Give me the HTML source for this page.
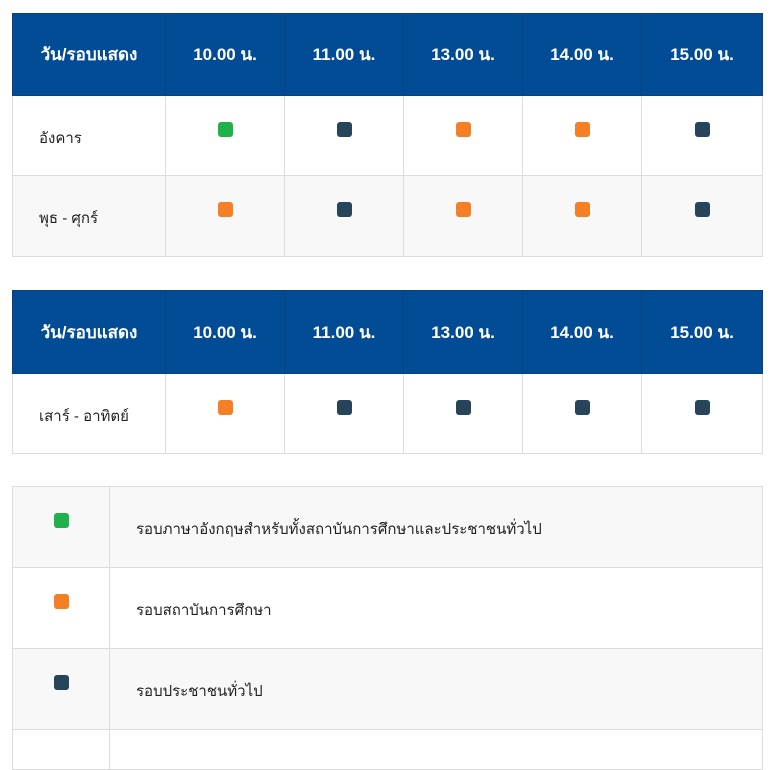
<!DOCTYPE html>
<html><head><meta charset="utf-8"><style>
body{margin:0;background:#fff;font-family:"Liberation Sans","Noto Sans CJK SC","WenQuanYi Zen Hei",sans-serif;}
.t{position:absolute;left:12px;width:750px;border-collapse:collapse;table-layout:fixed;}
.t td,.t th{border:1px solid #dcdcdc;padding:0;}
.t th{background:#024c96;color:#fff;font-weight:bold;font-size:17px;text-align:center;border-color:#0a427f;}
.t td{font-size:15px;color:#222;vertical-align:top;}
.t td.n{padding:30px 0 0 26px;}
.t td.c{text-align:center;padding-top:26px;}
.d{display:inline-block;width:15px;height:15px;border-radius:3px;}
.g{background:#20b14b}.o{background:#f47f25}.k{background:#27455a}
tr.alt td{background:#f8f8f8}
</style></head><body>
<table class="t" style="top:13px">
<colgroup><col style="width:153px"><col style="width:119px"><col style="width:119px"><col style="width:119px"><col style="width:119px"><col style="width:121px"></colgroup>
<tr style="height:82px"><th>วัน/รอบแสดง</th><th>10.00 น.</th><th>11.00 น.</th><th>13.00 น.</th><th>14.00 น.</th><th>15.00 น.</th></tr>
<tr style="height:80px"><td class="n">อังคาร</td><td class="c"><span class="d g"></span></td><td class="c"><span class="d k"></span></td><td class="c"><span class="d o"></span></td><td class="c"><span class="d o"></span></td><td class="c"><span class="d k"></span></td></tr>
<tr class="alt" style="height:81px"><td class="n">พุธ - ศุกร์</td><td class="c"><span class="d o"></span></td><td class="c"><span class="d k"></span></td><td class="c"><span class="d o"></span></td><td class="c"><span class="d o"></span></td><td class="c"><span class="d k"></span></td></tr>
</table>
<table class="t" style="top:290px">
<colgroup><col style="width:153px"><col style="width:119px"><col style="width:119px"><col style="width:119px"><col style="width:119px"><col style="width:121px"></colgroup>
<tr style="height:83px"><th>วัน/รอบแสดง</th><th>10.00 น.</th><th>11.00 น.</th><th>13.00 น.</th><th>14.00 น.</th><th>15.00 น.</th></tr>
<tr style="height:80px"><td class="n">เสาร์ - อาทิตย์</td><td class="c"><span class="d o"></span></td><td class="c"><span class="d k"></span></td><td class="c"><span class="d k"></span></td><td class="c"><span class="d k"></span></td><td class="c"><span class="d k"></span></td></tr>
</table>
<table class="t" style="top:486px">
<colgroup><col style="width:97px"><col style="width:653px"></colgroup>
<tr class="alt" style="height:81px"><td class="c"><span class="d g"></span></td><td class="n">รอบภาษาอังกฤษสำหรับทั้งสถาบันการศึกษาและประชาชนทั่วไป</td></tr>
<tr style="height:81px"><td class="c"><span class="d o"></span></td><td class="n">รอบสถาบันการศึกษา</td></tr>
<tr class="alt" style="height:81px"><td class="c"><span class="d k"></span></td><td class="n">รอบประชาชนทั่วไป</td></tr>
<tr style="height:40px"><td></td><td></td></tr>
</table>
</body></html>
